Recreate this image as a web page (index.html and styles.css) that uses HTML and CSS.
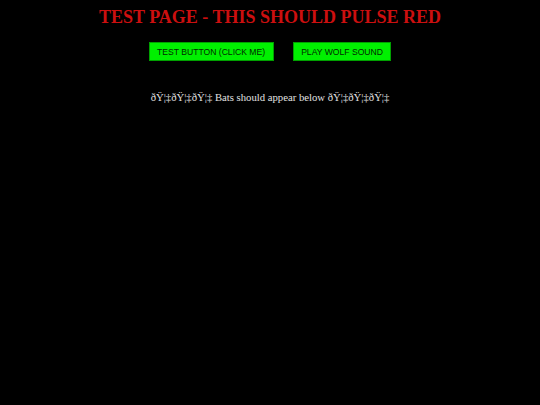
FILE: index.html
```html
<!DOCTYPE html>
<html>
<head>
<meta charset="utf-8">
<link rel="stylesheet" href="styles.css">
</head>
<body>
<div class="page">
  <h1 class="title">TEST PAGE - THIS SHOULD PULSE RED</h1>
  <div class="buttons">
    <button class="btn">TEST BUTTON (CLICK ME)</button>
    <button class="btn">PLAY WOLF SOUND</button>
  </div>
  <p class="note">ðŸ¦‡ðŸ¦‡ðŸ¦‡ Bats should appear below ðŸ¦‡ðŸ¦‡ðŸ¦‡</p>
</div>
</body>
</html>
```
FILE: styles.css
```css
html, body {
  margin: 0;
  padding: 0;
  background: #000;
  height: 100%;
}
.page {
  display: flex;
  flex-direction: column;
  align-items: center;
  padding-top: 7px;
  font-family: "Liberation Serif", serif;
}
.title {
  margin: 0;
  color: #cc0f0f;
  font-size: 18px;
  font-weight: bold;
  line-height: 21px;
}
.buttons {
  display: flex;
  gap: 19px;
  margin-top: 14px;
}
.btn {
  background: #00f000;
  border: 1px solid #00a000;
  color: #002a00;
  font-family: "Liberation Sans", sans-serif;
  font-size: 8.6px;
  height: 19px;
  padding: 0 7.5px;
  margin: 0;
}
.note {
  margin: 29px 0 0;
  color: #e0e0e0;
  font-size: 10.7px;
  line-height: 14px;
}
```
